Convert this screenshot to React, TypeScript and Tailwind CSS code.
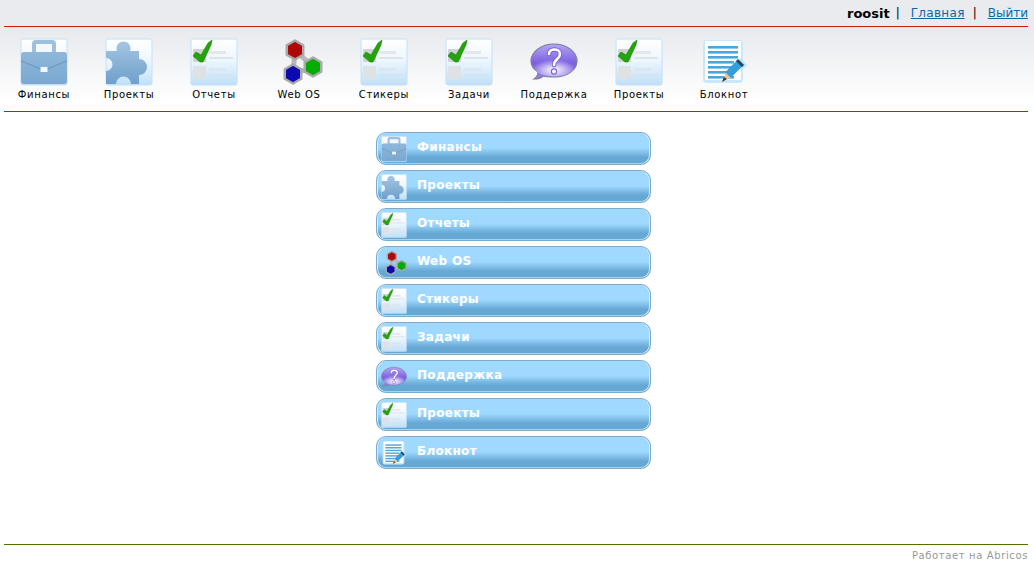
import { useId } from "react";

type IconProps = { size: number };

function Tile({ id }: { id: string }) {
  return (
    <>
      <defs>
        <linearGradient id={id} x1="0" y1="0" x2="0" y2="1">
          <stop offset="0" stopColor="#ffffff" />
          <stop offset="0.45" stopColor="#eef7fe" />
          <stop offset="1" stopColor="#bfe0f8" />
        </linearGradient>
      </defs>
      <rect x="1" y="1" width="46" height="46" rx="2" fill={`url(#${id})`} stroke="#c4e0fa" />
    </>
  );
}

function Briefcase({ size }: IconProps) {
  const id = useId();
  return (
    <svg width={size} height={size} viewBox="0 0 48 48">
      <Tile id={id + "t"} />
      <defs>
        <linearGradient id={id + "b"} x1="0" y1="0" x2="0" y2="1">
          <stop offset="0" stopColor="#8fb7da" />
          <stop offset="1" stopColor="#7aa8d0" />
        </linearGradient>
      </defs>
      <rect x="14" y="4" width="20" height="12" rx="2" fill="#f4f8fc" stroke="#9fc0dd" strokeWidth="4" />
      <rect x="1" y="14" width="46" height="32" rx="3" fill={`url(#${id}b)`} />
      <path d="M1 23 L21 31 H27 L47 23" fill="none" stroke="#6a96bf" strokeWidth="1" />
      <rect x="20.5" y="29" width="7" height="5" fill="#f2f6fa" />
    </svg>
  );
}

function Puzzle({ size }: IconProps) {
  const id = useId();
  return (
    <svg width={size} height={size} viewBox="0 0 48 48">
      <Tile id={id + "t"} />
      <defs>
        <linearGradient id={id + "b"} x1="0" y1="0" x2="0" y2="1">
          <stop offset="0" stopColor="#a4c6e2" />
          <stop offset="1" stopColor="#6f9fcb" />
        </linearGradient>
      </defs>
      <path
        d="M1 13 H12 A7 7 0 1 1 25 13 H34 V21 A8 8 0 1 1 34 37 V46 H26 A7 7 0 1 0 11 46 H1 V33 A6.5 6.5 0 1 0 1 20 Z"
        fill={`url(#${id}b)`}
      />
    </svg>
  );
}

function Checks({ size }: IconProps) {
  const id = useId();
  return (
    <svg width={size} height={size} viewBox="0 0 48 48">
      <Tile id={id + "t"} />
      <rect x="3" y="11" width="13" height="13" rx="1" fill="#cfd3d5" />
      <rect x="3" y="28" width="13" height="13" rx="1" fill="#dfe2e4" />
      <rect x="19" y="13" width="17" height="3" fill="#e4e8ea" />
      <rect x="19" y="19" width="24" height="2" fill="#dfe4e7" />
      <rect x="19" y="30" width="17" height="3" fill="#dbe6ee" />
      <rect x="19" y="36" width="24" height="2" fill="#d4e3ee" />
      <path d="M3 18 L6 14 L11 17 L18 5 L22 2 L21 7 L13 24 L10 24 Z" fill="#22a50a" stroke="#178004" strokeWidth="0.6" />
    </svg>
  );
}

function Hex({ cx, cy, fill }: { cx: number; cy: number; fill: string }) {
  const r = 9.5;
  const pts = [0, 60, 120, 180, 240, 300]
    .map((a) => {
      const t = ((a + 30) * Math.PI) / 180;
      return `${cx + r * Math.cos(t)},${cy + r * Math.sin(t)}`;
    })
    .join(" ");
  return <polygon points={pts} fill={fill} stroke="#a9a9a9" strokeWidth="2.5" strokeLinejoin="round" />;
}

function WebOs({ size }: IconProps) {
  return (
    <svg width={size} height={size} viewBox="0 0 48 48">
      <path d="M20 12 L38 29 L18 36 Z" fill="none" stroke="#b8b8b8" strokeWidth="5" />
      <Hex cx={20} cy={12} fill="#b00808" />
      <Hex cx={38} cy={29} fill="#04ac04" />
      <Hex cx={18} cy={36} fill="#0a0ab0" />
    </svg>
  );
}

function Bubble({ size }: IconProps) {
  const id = useId();
  return (
    <svg width={size} height={size} viewBox="0 0 48 48">
      <defs>
        <linearGradient id={id} x1="0" y1="0" x2="0" y2="1">
          <stop offset="0" stopColor="#b4a4f4" />
          <stop offset="0.55" stopColor="#7c60e0" />
          <stop offset="1" stopColor="#9a84ea" />
        </linearGradient>
        <radialGradient id={id + "g"} cx="0.5" cy="0.65" r="0.55">
          <stop offset="0" stopColor="#ffffff" />
          <stop offset="1" stopColor="#ffffff" stopOpacity="0" />
        </radialGradient>
      </defs>
      <path
        d="M24 6 C37 6 47 14 47 23 C47 32 37 39 25 39 C20 39 16 39 13 38 C11 40 8 41 4 41 C7 39 8 37 8 34 C3 31 1 27 1 23 C1 14 11 6 24 6 Z"
        fill={`url(#${id})`}
        stroke="#7d7d9e"
        strokeWidth="1.2"
      />
      <ellipse cx="24" cy="29" rx="20" ry="9.5" fill={`url(#${id}g)`} />
      <path d="M19 16 C19 10 30 10 30 16 C30 21 24 21 24 27" fill="none" stroke="#7a5fd0" strokeWidth="4.4" strokeLinecap="round" />
      <path d="M19 16 C19 10 30 10 30 16 C30 21 24 21 24 27" fill="none" stroke="#ffffff" strokeWidth="2.6" strokeLinecap="round" />
      <circle cx="24" cy="33.5" r="2.6" fill="#ffffff" stroke="#7a5fd0" strokeWidth="1.1" />
    </svg>
  );
}

function Notepad({ size }: IconProps) {
  return (
    <svg width={size} height={size} viewBox="0 0 48 48">
      <rect x="3" y="2" width="40" height="43" rx="4" fill="#c9e8fb" />
      <rect x="5" y="3" width="36" height="39" fill="#ffffff" />
      {[9, 14, 19, 24, 29, 34, 39].map((y) => (
        <rect key={y} x="8" y={y - 1} width={y > 20 ? 26 : 30} height="2.6" fill="#4ba6da" />
      ))}
      <path d="M39 19 L47 27 L41 33 Z" fill="#bfe3f8" />
      <path d="M22 44 L26 34 L32 39 Z" fill="#e8c89a" />
      <path d="M22 44 L24 39 L27 41 Z" fill="#333333" />
      <path d="M28 37 L40 25" stroke="#2f9fe0" strokeWidth="8" />
      <path d="M37 22 L43 28" stroke="#24485f" strokeWidth="3" />
    </svg>
  );
}

const items = [
  { label: "Финансы", Icon: Briefcase },
  { label: "Проекты", Icon: Puzzle },
  { label: "Отчеты", Icon: Checks },
  { label: "Web OS", Icon: WebOs },
  { label: "Стикеры", Icon: Checks },
  { label: "Задачи", Icon: Checks },
  { label: "Поддержка", Icon: Bubble },
  { label: "Проекты", Icon: Checks },
  { label: "Блокнот", Icon: Notepad },
];

export default function App() {
  return (
    <div className="flex h-[570px] flex-col overflow-hidden bg-white font-['DejaVu_Sans',sans-serif] text-black">
      <div className="bg-gradient-to-b from-[#e9ebef] from-[30%] to-white to-[90%]">
        <div className="ml-1 mr-1.5 flex h-[27px] items-start justify-end gap-[5px] border-b border-[#c42200] pt-[6px] text-[12px] leading-[15px]">
          <span className="mr-[1px] text-[13px] font-bold">roosit</span>
          <span>|</span>
          <a className="ml-[6px] mr-[3px] tracking-[0.3px] text-[#0a6aa8] underline">Главная</a>
          <span>|</span>
          <a className="ml-[6px] text-[#0a6aa8] underline">Выйти</a>
        </div>
        <div className="ml-1 mr-1.5 h-[85px] border-b border-[#b82400]">
          <div className="-ml-[2.5px] flex pt-[11px]">
            {items.map(({ label, Icon }, i) => (
              <div key={i} className="flex w-[85px] flex-col items-center">
                <Icon size={48} />
                <span className="whitespace-nowrap pt-[2px] text-[10px] leading-[13px] tracking-[0.65px]">{label}</span>
              </div>
            ))}
          </div>
        </div>
      </div>

      <div className="flex flex-1 flex-col items-center gap-[5px] pt-[20px]">
        {items.map(({ label, Icon }, i) => (
          <div
            key={i}
            className="-ml-[7px] flex h-[33px] w-[275px] shrink-0 items-center rounded-[10px] border border-[#7fabc8] bg-gradient-to-b from-[#9fd9ff] from-[48%] to-[#66a8d4] to-[78%] pl-[4px] shadow-[inset_1px_0_0_#d2ecff,inset_-1px_0_0_#d2ecff,inset_0_-1px_0_#a6d4ee]"
          >
            <span className="flex h-[26px] w-[26px] shrink-0">
              <Icon size={26} />
            </span>
            <span className="ml-[10px] -mt-[3px] text-[12px] font-bold tracking-[0.3px] text-white">{label}</span>
          </div>
        ))}
      </div>

      <div className="ml-1 mr-1.5 h-[26px] border-t border-[#4f7000] pt-[4px] text-right text-[10px] leading-[14px] tracking-[0.62px] text-[#999999]">
        Работает на Abricos
      </div>
    </div>
  );
}
